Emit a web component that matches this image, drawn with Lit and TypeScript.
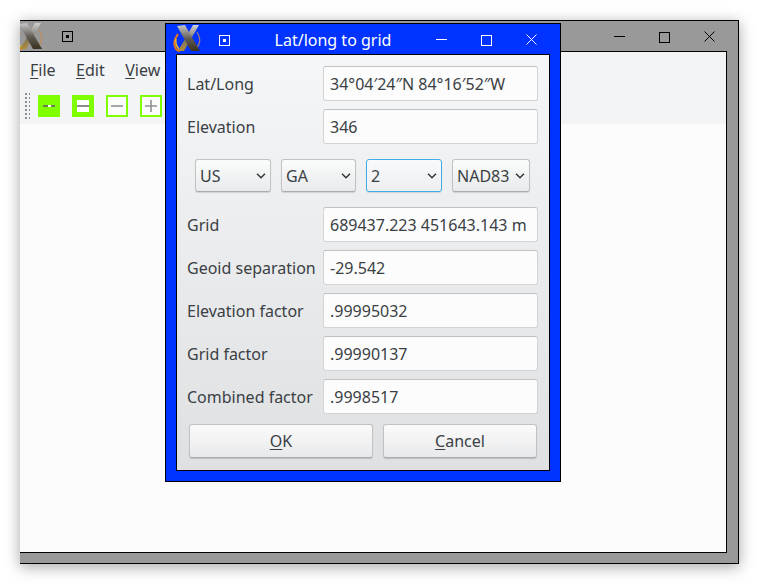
import { LitElement, html, css, svg } from "lit";
import { customElement } from "lit/decorators.js";

const logo = (id: string) => svg`<svg class="logo" width="30" height="30" viewBox="0 0 30 30">
  <defs>
    <linearGradient id="${id}a" x1="0" y1="0" x2="0" y2="1"><stop offset="0" stop-color="#c8c8c8"/><stop offset=".55" stop-color="#5d5850"/><stop offset="1" stop-color="#3a3120"/></linearGradient>
    <linearGradient id="${id}b" x1="0" y1="0" x2="0" y2="1"><stop offset="0" stop-color="#d0d0d0"/><stop offset=".55" stop-color="#7a756c"/><stop offset="1" stop-color="#b08c30"/></linearGradient>
  </defs>
  <path d="M25 8 Q31 17 24 25" fill="none" stroke="#c98a50" stroke-width="1.2" opacity=".8"/>
  <path d="M6 10 Q0 18 4 25 Q6 27 8 27" fill="none" stroke="#e8761a" stroke-width="2"/>
  <path d="M4 15 Q3 21 7 25" fill="none" stroke="#f3c020" stroke-width="1.4"/>
  <path d="M21 1 L27 1 L12 27 L6 27 Z" fill="url(#${id}b)"/>
  <path d="M5 2 L13 1 L28 27 L19 27 Z" fill="url(#${id}a)"/>
</svg>`;

const winButtons = (cls: string) => html`
  <span class="btns ${cls}">
    <svg width="12" height="12" viewBox="0 0 12 12"><path d="M0 5.5h11" stroke="currentColor" fill="none"/></svg>
    <svg width="12" height="12" viewBox="0 0 12 12"><rect x=".5" y="1.5" width="10" height="10" stroke="currentColor" fill="none"/></svg>
    <svg width="12" height="12" viewBox="0 0 12 12"><path d="M.5 .5l10 10M10.5 .5L.5 10.5" stroke="currentColor" fill="none"/></svg>
  </span>`;

const pin = html`<svg class="pin" width="11" height="11" viewBox="0 0 11 11"><rect x=".5" y=".5" width="10" height="10" stroke="currentColor" fill="none"/><rect x="4" y="4" width="3" height="3" fill="currentColor"/></svg>`;

const chevron = html`<svg class="chev" width="10" height="6" viewBox="0 0 10 6"><path d="M1 .8l4 4 4-4" stroke="#31363b" stroke-width="1.5" fill="none"/></svg>`;

@customElement("app-root")
export class AppRoot extends LitElement {
  static styles = css`
    :host { display: block; width: 759px; height: 584px; background: #fff; position: relative; overflow: hidden;
      font-family: "Noto Sans", sans-serif; font-size: 16px; color: #3a3f44; }
    .main { position: absolute; left: 20px; top: 20px; width: 719px; height: 544px; box-sizing: border-box;
      background: #999; border: 1px solid #000; border-left: 0; display: flex; flex-direction: column;
      box-shadow: 0 3px 14px rgba(0,0,0,.35); }
    .title { height: 30px; flex: none; display: flex; align-items: flex-start; position: relative; overflow: hidden; }
    .logo { flex: none; }
    .main .logo { margin-left: -6px; margin-top: 1px; }
    .main .pin { margin-left: 18px; margin-top: 10px; color: #000; }
    .btns { margin-left: auto; margin-top: 10px; margin-right: 22px; display: flex; align-items: flex-start; gap: 33px; }
    .btns.dark { color: #000; }
    .btns.light { color: #fff; }
    .client { flex: 1; margin-right: 11px; border-top: 1px solid #000; border-bottom: 1px solid #000; border-right: 1px solid #000;
      background: #fcfcfc; display: flex; flex-direction: column; min-height: 0; margin-bottom: 10px; }
    .top { background: #f3f4f5; height: 72px; flex: none; }
    .menu { display: flex; height: 36px; align-items: center; padding-left: 10px; gap: 20.5px; }
    u { text-underline-offset: 2px; }
    .tools { display: flex; align-items: center; height: 36px; padding-left: 4px; }
    .handle { width: 6px; height: 28px; margin-right: 8px; background-image: radial-gradient(circle, #8a8d90 0 1px, transparent 1.1px);
      background-size: 4px 4px; }
    .tb { width: 22px; height: 22px; box-sizing: border-box; margin-right: 12px; display: block; flex: none; }
    .dialog { position: absolute; left: 165px; top: 23px; width: 396px; height: 459px; box-sizing: border-box;
      background: #0033ff; border: 1px solid #000; display: flex; flex-direction: column; }
    .dialog .title { color: #fff; }
    .dialog .logo { margin-left: 6px; }
    .dialog .pin { margin-left: 17px; margin-top: 11px; }
    .dialog .name { position: absolute; left: 0; right: 60px; top: 5px; text-align: center; }
    .body { flex: 1; margin: 0 10px 10px 10px; border: 1px solid #000; background: linear-gradient(#f5f6f7, #dfe0e2);
      padding: 11px 11px 0 10px; display: flex; flex-direction: column; }
    .row { display: flex; align-items: center; height: 35px; margin-bottom: 8px; }
    .row label { width: 136px; flex: none; }
    .field { flex: 1; height: 35px; box-sizing: border-box; background: #fcfcfc; border: 1px solid #d2d4d6; border-top-color: #bfc1c3; border-radius: 3px;
      padding: 0 6px; display: flex; align-items: center; white-space: nowrap; }
    .combos { display: flex; gap: 10px; padding-left: 8px; margin: 7px 0 15px; height: 33px; }
    .combo { box-sizing: border-box; height: 33px; border: 1px solid #c0c2c4; border-bottom-color: #a9abad; border-radius: 3px;
      background: linear-gradient(#fafbfb, #e9eaeb); display: flex; align-items: center; padding: 0 4px;
      box-shadow: 0 1px 1px rgba(0,0,0,.12); justify-content: space-between; }
    .combo.focus { border-color: #3daee9; background: linear-gradient(#f9fafb, #eceef0); }
    .actions { display: flex; gap: 10px; padding-left: 2px; margin-top: 2px; }
    .btn { box-sizing: border-box; height: 34px; border: 1px solid #c0c2c4; border-bottom-color: #a9abad; border-radius: 3px; background: linear-gradient(#fbfbfc, #e8e9ea);
      display: flex; align-items: center; justify-content: center; box-shadow: 0 1px 1px rgba(0,0,0,.15); }
  `;

  render() {
    const fields1 = [["Lat/Long", "34°04′24″N 84°16′52″W"], ["Elevation", "346"]];
    const fields2 = [["Grid", "689437.223 451643.143 m"], ["Geoid separation", "-29.542"], ["Elevation factor", ".99995032"], ["Grid factor", ".99990137"], ["Combined factor", ".9998517"]];
    const row = (f: string[]) => html`<div class="row"><label>${f[0]}</label><div class="field">${f[1]}</div></div>`;
    const combo = (t: string, w: number, focus = false) =>
      html`<div class="combo ${focus ? "focus" : ""}" style="width:${w}px"><span>${t}</span>${chevron}</div>`;
    return html`
      <div class="main">
        <div class="title">${logo("m")}${pin}${winButtons("dark")}</div>
        <div class="client">
          <div class="top">
            <div class="menu"><span><u>F</u>ile</span><span><u>E</u>dit</span><span><u>V</u>iew</span></div>
            <div class="tools">
              <span class="handle"></span>
              <svg class="tb" viewBox="0 0 22 22"><rect width="22" height="22" fill="#80ff00"/><path d="M5 11h12" stroke="#6b7a50" stroke-width="2"/><path d="M10 11h3" stroke="#fff" stroke-width="2"/></svg>
              <svg class="tb" viewBox="0 0 22 22"><rect width="22" height="22" fill="#80ff00"/><rect x="5" y="5" width="12" height="12" fill="#fff"/><path d="M5 11h12" stroke="#8a8d8a" stroke-width="2"/></svg>
              <svg class="tb" viewBox="0 0 22 22"><rect width="22" height="22" fill="#80ff00"/><rect x="2" y="2" width="18" height="18" fill="#fcfcfc"/><path d="M5 11h12" stroke="#a5a7a9" stroke-width="2"/></svg>
              <svg class="tb" viewBox="0 0 22 22"><rect width="22" height="22" fill="#80ff00"/><rect x="2" y="2" width="18" height="18" fill="#fcfcfc"/><path d="M5 11h12M11 5v12" stroke="#8f9193" stroke-width="1.6"/></svg>
            </div>
          </div>
        </div>
      </div>
      <div class="dialog">
        <div class="title">${logo("d")}${pin}<span class="name">Lat/long to grid</span>${winButtons("light")}</div>
        <div class="body">
          ${fields1.map(row)}
          <div class="combos">${combo("US", 76)}${combo("GA", 75)}${combo("2", 76, true)}${combo("NAD83", 78)}</div>
          ${fields2.map(row)}
          <div class="actions">
            <div class="btn" style="width:184px"><span><u>O</u>K</span></div>
            <div class="btn" style="width:154px"><span><u>C</u>ancel</span></div>
          </div>
        </div>
      </div>`;
  }
}
